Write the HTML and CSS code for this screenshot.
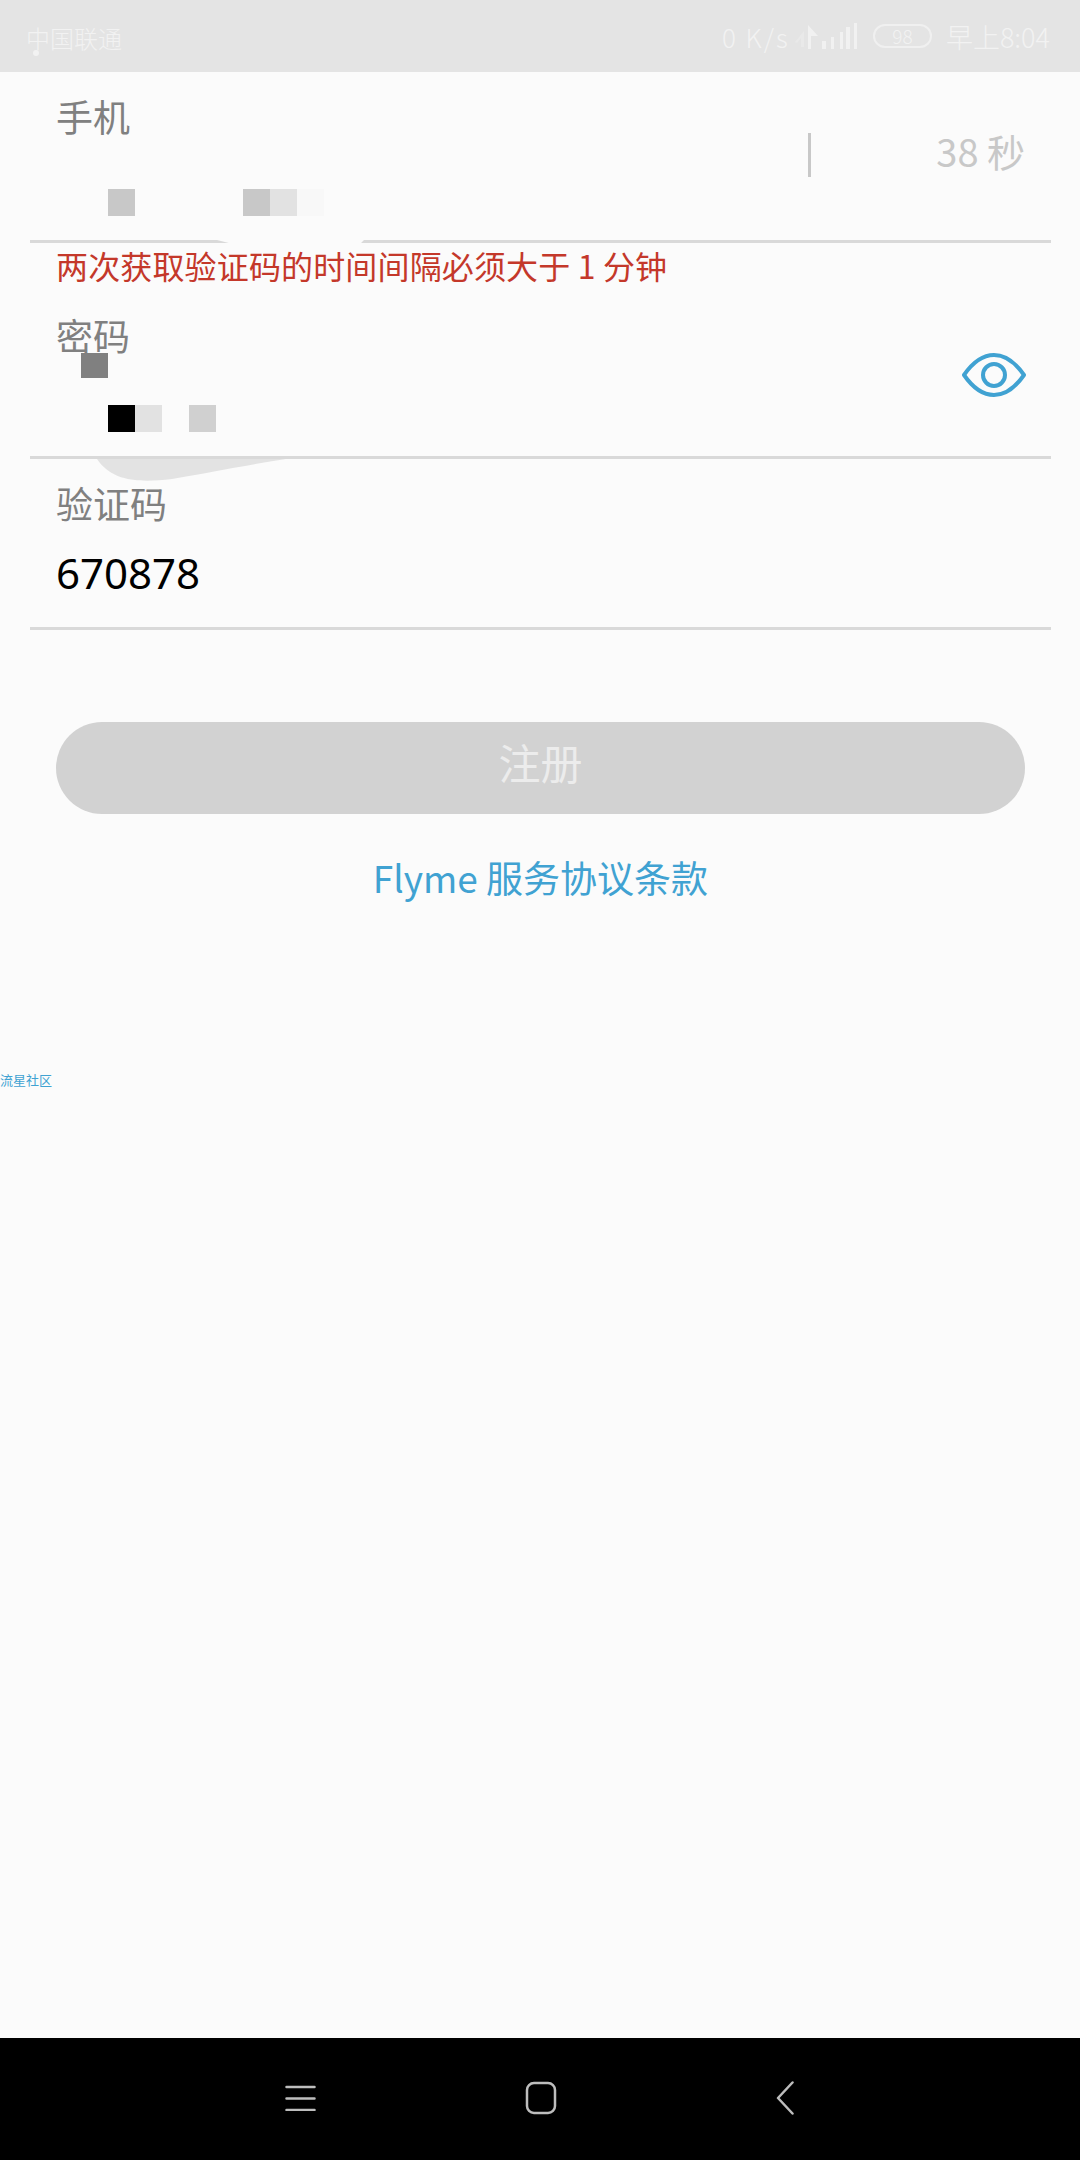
FILE: index.html
```html
<!DOCTYPE html>
<html lang="zh-CN">
<head>
    <meta charset="UTF-8">
    <meta name="viewport" content="width=device-width, initial-scale=1.0">
    <title>注册</title>
    <link rel="stylesheet" href="styles.css">
</head>
<body>

<div class="status-bar">
    <div class="carrier">中国联通<span class="carrier-dot"></span></div>
    <div class="status-right">
        <span class="speed">0 K/s</span>
        <svg class="signal" width="64" height="27" viewBox="0 0 64 27">
            <path d="M0 19L9 8V24H6V15L2 20z" fill="#e9e9e9"/>
            <path d="M13 26V2L23 13H16V26z" fill="#f1f1f1"/>
            <rect x="27" y="18" width="4" height="8" fill="#f1f1f1"/>
            <rect x="36" y="14" width="3" height="12" fill="#f1f1f1"/>
            <rect x="45" y="9" width="3" height="17" fill="#f1f1f1"/>
            <rect x="51" y="4" width="4" height="22" fill="#f1f1f1"/>
            <rect x="59" y="0" width="3" height="26" fill="#f1f1f1"/>
        </svg>
        <span class="battery">98</span>
        <span class="clock">早上8:04</span>
    </div>
</div>

<div class="content">
    <div class="field field-phone">
        <div class="field-main">
            <div class="label">手机</div>
            <div class="blocks blocks-phone">
                <span class="block b-c8"></span>
                <span class="block"></span>
                <span class="block"></span>
                <span class="block"></span>
                <span class="block"></span>
                <span class="block b-c8"></span>
                <span class="block b-e2"></span>
                <span class="block b-f8"></span>
            </div>
        </div>
        <div class="resend">
            <span class="resend-line"></span>
            <span class="timer">38 秒</span>
        </div>
        <span class="line-gap"></span>
    </div>
    <div class="error">两次获取验证码的时间间隔必须大于 1 分钟</div>

    <div class="field field-password">
        <div class="field-main">
            <div class="label">密码</div>
            <span class="block b-80 block-under"></span>
            <div class="blocks blocks-password">
                <span class="block b-00"></span>
                <span class="block b-e2"></span>
                <span class="block"></span>
                <span class="block b-d0"></span>
            </div>
        </div>
        <svg class="eye" width="66" height="46" viewBox="0 0 66 46">
            <path d="M3 23C12 10 22 3 33 3s21 7 30 20c-9 13-19 20-30 20S12 36 3 23z" fill="none" stroke="#40a2d2" stroke-width="4" stroke-linejoin="round"/>
            <circle cx="33" cy="23" r="11" fill="none" stroke="#40a2d2" stroke-width="4"/>
        </svg>
        <svg class="smudge" width="189" height="22" viewBox="0 0 189 22">
            <path d="M0 0H189C150 6 110 14 75 20C40 24 15 22 0 0z" fill="#e3e3e3"/>
        </svg>
    </div>

    <div class="field field-code">
        <div class="label">验证码</div>
        <div class="code-value">670878</div>
    </div>

    <button class="register" type="button">注册</button>
    <a class="terms">Flyme 服务协议条款</a>
    <div class="community">流星社区</div>
</div>

<div class="nav-bar">
    <svg width="31" height="26" viewBox="0 0 31 26">
        <path d="M1.500 2H29.500M1.500 13.500H29.500M1.500 25H29.500" stroke="#bdbdbd" stroke-width="2.500" stroke-linecap="round"/>
    </svg>
    <svg class="nav-home" width="32" height="34" viewBox="0 0 32 34">
        <rect x="2" y="2" width="28" height="30" rx="7" fill="none" stroke="#bdbdbd" stroke-width="2.500"/>
    </svg>
    <svg class="nav-back" width="18" height="34" viewBox="0 0 18 34">
        <path d="M16.500 1.500L2 17L16.500 32.500" fill="none" stroke="#bdbdbd" stroke-width="2.500" stroke-linecap="round" stroke-linejoin="round"/>
    </svg>
</div>

</body>
</html>
```

FILE: styles.css
```css
* {
    box-sizing: border-box;
}

html, body {
    height: 100%;
}

body {
    margin: 0;
    font-family: "Noto Sans CJK SC", "Noto Sans", sans-serif;
    background-color: #fbfbfb;
    display: flex;
    flex-direction: column;
    overflow: hidden;
}

/* status bar */
.status-bar {
    height: 72px;
    flex-shrink: 0;
    background-color: #e4e4e4;
    color: #f2f2f2;
    display: flex;
    justify-content: space-between;
    align-items: center;
    padding: 0 30px 0 26px;
    font-size: 24px;
    font-weight: 300;
}

.carrier {
    position: relative;
    line-height: 30px;
    margin-top: 4px;
}

.carrier-dot {
    position: absolute;
    left: 7px;
    top: 27px;
    width: 6px;
    height: 6px;
    border-radius: 50%;
    background-color: #f2f2f2;
}

.status-right {
    display: flex;
    align-items: center;
}

.speed {
    width: 73px;
    font-size: 26px;
    letter-spacing: 2px;
}

.battery {
    width: 59px;
    height: 24px;
    margin-left: 14px;
    border: 2px solid #f0f0f0;
    border-radius: 12px;
    font-size: 19px;
    line-height: 20px;
    text-align: center;
}

.clock {
    margin-left: 14px;
    font-size: 27px;
}

/* form */
.content {
    flex: 1;
    position: relative;
    padding: 0 29px 0 30px;
}

.field {
    position: relative;
    display: flex;
    align-items: center;
    border-bottom: 3px solid #d9d9d9;
}

.field-phone {
    height: 171px;
}

.field-password {
    height: 149px;
    margin-top: 24px;
}

.field-code {
    height: 171px;
    display: block;
    padding: 19px 0 0 26px;
}

.field-main {
    flex: 1;
    align-self: flex-start;
    padding-left: 26px;
}

.label {
    font-size: 37px;
    line-height: 50px;
    color: #808080;
}

.field-phone .label {
    margin-top: 19px;
}

.blocks {
    display: flex;
}

.blocks-phone {
    margin: 48px 0 0 52px;
}

.blocks-password {
    margin: 27px 0 0 52px;
}

.block {
    display: block;
    width: 27px;
    height: 27px;
    flex-shrink: 0;
}

.b-c8 { background-color: #c8c8c8; }
.b-e2 { background-color: #e2e2e2; }
.b-f8 { background-color: #f8f8f8; }
.b-d0 { background-color: #d0d0d0; }
.b-80 { background-color: #808080; }
.b-00 { background-color: #000; }

.block-under {
    margin-left: 25px;
    height: 25px;
    margin-top: -7px;
}

.resend {
    width: 243px;
    display: flex;
    justify-content: space-between;
    align-items: center;
    padding-right: 26px;
    margin-top: -2px;
}

.resend-line {
    width: 3px;
    height: 44px;
    background-color: #c8c8c8;
}

.timer {
    font-size: 38px;
    line-height: 44px;
    color: #c8c8c8;
    margin-top: -8px;
}

.line-gap {
    position: absolute;
    left: 187px;
    bottom: -3px;
    width: 147px;
    height: 3px;
    background-color: #fbfbfb;
    clip-path: polygon(0 0, 100% 0, 98% 100%, 8% 100%);
}

.error {
    font-size: 32px;
    line-height: 42px;
    margin: 1px 0 0 26px;
    letter-spacing: 0.15px;
    color: #c4382a;
}

.eye {
    margin: -17px 24px 0 0;
}

.smudge {
    position: absolute;
    left: 67px;
    bottom: -25px;
}

.code-value {
    font-size: 42px;
    line-height: 50px;
    margin-top: 20px;
    color: #000;
    font-family: "Noto Sans", sans-serif;
}

.register {
    display: block;
    width: 969px;
    height: 92px;
    margin: 92px 0 0 26px;
    border: none;
    border-radius: 46px;
    background-color: #d2d2d2;
    color: #ececec;
    font-family: inherit;
    font-size: 42px;
    padding: 0 0 14px;
}

.terms {
    display: block;
    width: 969px;
    margin: 38px 0 0 26px;
    text-align: center;
    font-size: 37px;
    line-height: 50px;
    color: #40a2d2;
}

.community {
    position: absolute;
    left: 0;
    top: 999px;
    font-size: 13px;
    line-height: 18px;
    color: #40a2d2;
}

/* bottom nav */
.nav-bar {
    height: 122px;
    flex-shrink: 0;
    background-color: #000;
    display: flex;
    align-items: center;
    padding: 0 0 2px 285px;
}

.nav-home {
    margin-left: 209px;
}

.nav-back {
    margin-left: 219px;
}
```
